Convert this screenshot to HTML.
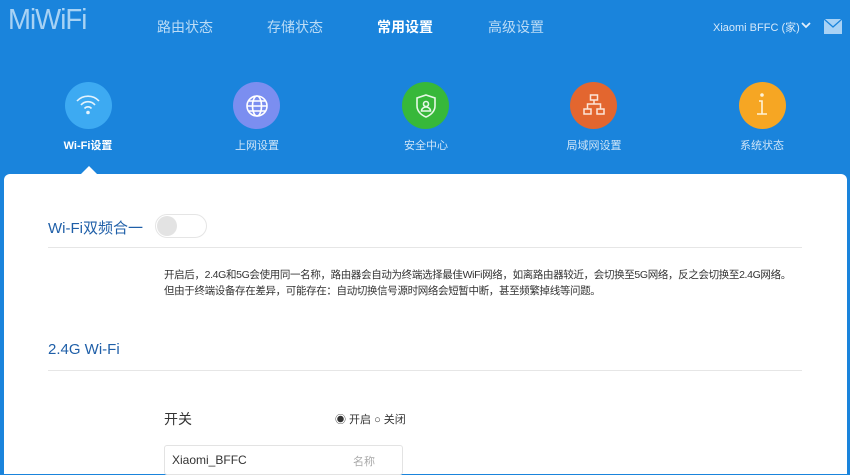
<!DOCTYPE html>
<html><head><meta charset="utf-8"><style>
*{margin:0;padding:0;box-sizing:border-box}
body{width:850px;height:460px;overflow:hidden;background:#1a84dc;font-family:"Liberation Sans","Noto Sans CJK SC",sans-serif;position:relative}
.a{position:absolute}
.nav{top:17px;font-size:14px;color:#bcdcf6}
.ic{width:47px;height:47px;border-radius:50%;top:82px}
.lbl{top:137px;font-size:11px;color:#cfe5f8;width:120px;text-align:center}
.panel{left:4px;top:174px;width:843px;height:300px;background:#fff;border-radius:6px 6px 0 0}
.line{height:1px;background:#e6e6e6;left:48px;width:754px}
</style></head><body>
<div class="a" style="left:8px;top:4px;font-size:29px;color:rgba(215,236,252,0.75);letter-spacing:-1px;transform:scaleX(0.95);transform-origin:left">MiWiFi</div>
<div class="a nav" style="left:157px">路由状态</div>
<div class="a nav" style="left:267px">存储状态</div>
<div class="a nav" style="left:377px;color:#fff;font-weight:bold">常用设置</div>
<div class="a nav" style="left:488px">高级设置</div>
<div class="a" style="left:713px;top:19px;font-size:11px;color:#d6e9fa">Xiaomi BFFC (家)</div>
<svg class="a" style="left:801px;top:22px" width="10" height="7"><path d="M1 1l4 4 4-4" stroke="#e0eefb" stroke-width="1.8" fill="none"/></svg>
<svg class="a" style="left:824px;top:19px" width="18" height="15"><rect x="0" y="0" width="18" height="15" fill="#a9d2f5"/><path d="M0 0l9 8 9-8" stroke="#1a84dc" stroke-width="1.3" fill="none"/></svg>

<div class="a ic" style="left:65px;background:#3daaf2"></div>
<svg class="a" style="left:74px;top:92px" width="28" height="26" fill="none" stroke="#e4f3fd" stroke-width="1.6"><path d="M3 9a15 15 0 0 1 22 0"/><path d="M7 13a9 9 0 0 1 14 0"/><path d="M10.5 16.5a4.5 4.5 0 0 1 7 0"/><circle cx="14" cy="20.5" r="1" fill="#e4f3fd"/></svg>
<div class="a lbl" style="left:28px;color:#fff;font-weight:bold">Wi-Fi设置</div>

<div class="a ic" style="left:233px;background:#7b8ef0"></div>
<svg class="a" style="left:244px;top:93px" width="26" height="26" fill="none" stroke="#fff" stroke-width="1.6"><circle cx="13" cy="13" r="10"/><ellipse cx="13" cy="13" rx="4.5" ry="10"/><path d="M3 13h20M5 8h16M5 18h16"/></svg>
<div class="a lbl" style="left:197px">上网设置</div>

<div class="a ic" style="left:402px;background:#37b83a"></div>
<svg class="a" style="left:414px;top:93px" width="24" height="26" fill="none" stroke="#e6f8e6" stroke-width="1.6"><path d="M12 2l9 3v8c0 5-4 9-9 11-5-2-9-6-9-11V5z"/><circle cx="12" cy="11" r="2.5"/><path d="M7.5 18a4.5 4 0 0 1 9 0z"/></svg>
<div class="a lbl" style="left:366px">安全中心</div>

<div class="a ic" style="left:570px;background:#e3662f"></div>
<svg class="a" style="left:582px;top:93px" width="24" height="24" fill="none" stroke="#fce5d8" stroke-width="1.5"><rect x="8.5" y="2" width="7" height="5"/><rect x="2" y="16" width="7" height="5"/><rect x="15" y="16" width="7" height="5"/><path d="M12 7v4M5.5 16v-5h13v5"/></svg>
<div class="a lbl" style="left:534px">局域网设置</div>

<div class="a ic" style="left:739px;background:#f6a623"></div>
<svg class="a" style="left:752px;top:92px" width="20" height="26" fill="none" stroke="#fff3d8" stroke-width="1.6"><circle cx="10" cy="3" r="1" fill="#fff3d8"/><path d="M7 9h3v13M5 22h10"/></svg>
<div class="a lbl" style="left:702px">系统状态</div>

<div class="a panel"></div>
<div class="a" style="left:80px;top:166px;width:0;height:0;border-left:9px solid transparent;border-right:9px solid transparent;border-bottom:9px solid #fff"></div>

<div class="a" style="left:48px;top:217px;font-size:15px;color:#1f5fa8">Wi-Fi双频合一</div>
<div class="a" style="left:155px;top:214px;width:52px;height:24px;border:1px solid #e5e5e5;border-radius:12px;background:#fff"></div>
<div class="a" style="left:157px;top:216px;width:20px;height:20px;border-radius:50%;background:#e3e3e3"></div>
<div class="a line" style="top:247px"></div>
<div class="a" style="left:164px;top:267px;font-size:10.5px;color:#333;line-height:16px;letter-spacing:-0.35px;white-space:nowrap">开启后，2.4G和5G会使用同一名称，路由器会自动为终端选择最佳WiFi网络，如离路由器较近，会切换至5G网络，反之会切换至2.4G网络。<br>但由于终端设备存在差异，可能存在：自动切换信号源时网络会短暂中断，甚至频繁掉线等问题。</div>
<div class="a" style="left:48px;top:341px;font-size:15px;color:#1f5fa8">2.4G Wi-Fi</div>
<div class="a line" style="top:370px"></div>
<div class="a" style="left:164px;top:409px;font-size:14px;color:#333">开关</div>
<div class="a" style="left:335px;top:411px;font-size:11px;color:#333">◉ 开启 ○ 关闭</div>
<div class="a" style="left:164px;top:445px;width:239px;height:30px;border:1px solid #e3e3e3;border-radius:3px"></div>
<div class="a" style="left:172px;top:453px;font-size:12px;color:#333">Xiaomi_BFFC</div>
<div class="a" style="left:353px;top:453px;font-size:11px;color:#aaa">名称</div>
</body></html>
